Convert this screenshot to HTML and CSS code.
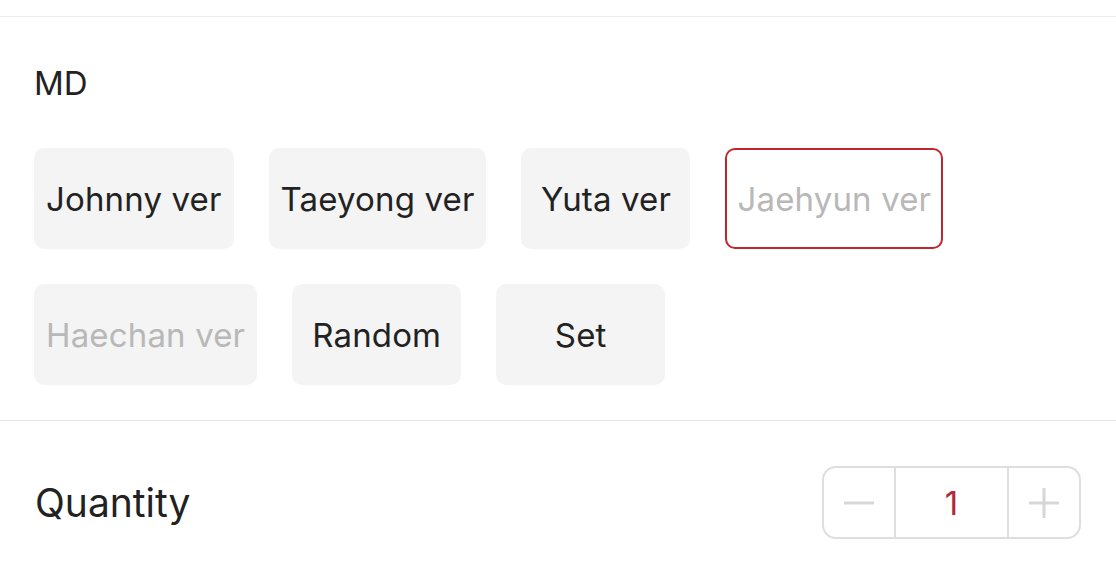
FILE: index.html
```html
<!DOCTYPE html>
<html lang="en">
<head>
    <meta charset="UTF-8">
    <meta name="viewport" content="width=device-width, initial-scale=1.0">
    <title>Options</title>
    <link rel="stylesheet" href="styles.css">
</head>
<body>
    <div class="top-bar"></div>

    <div class="option-section">
        <div class="option-title">MD</div>
        <div class="option-list">
            <button class="option-btn">Johnny ver</button>
            <button class="option-btn">Taeyong ver</button>
            <button class="option-btn">Yuta ver</button>
            <button class="option-btn selected soldout">Jaehyun ver</button>
            <button class="option-btn soldout">Haechan ver</button>
            <button class="option-btn">Random</button>
            <button class="option-btn">Set</button>
        </div>
    </div>

    <div class="quantity-row">
        <div class="quantity-label">Quantity</div>
        <div class="stepper">
            <button class="step-btn" aria-label="decrease">
                <svg width="30" height="30" viewBox="0 0 30 30"><path d="M1 15h28" stroke="#d6d6d6" stroke-width="3" stroke-linecap="round"/></svg>
            </button>
            <div class="step-value">1</div>
            <button class="step-btn" aria-label="increase">
                <svg width="30" height="30" viewBox="0 0 30 30"><path d="M1 15h28M15 1v28" stroke="#d6d6d6" stroke-width="3" stroke-linecap="round"/></svg>
            </button>
        </div>
    </div>
</body>
</html>
```

FILE: styles.css
```css
body {
    margin: 0;
    background: #fff;
    font-family: 'Inter', 'Liberation Sans', sans-serif;
    color: #222;
}
.top-bar {
    height: 16px;
    border-bottom: 1px solid #ececec;
}
.option-section {
    padding: 46px 35px 35px 34px;
    border-bottom: 1px solid #e6e6e6;
}
.option-title {
    font-size: 33px;
    line-height: 40px;
    margin-bottom: 45px;
}
.option-list {
    display: flex;
    flex-wrap: wrap;
    gap: 35px;
}
.option-btn {
    height: 101px;
    min-width: 169px;
    padding: 0 12px;
    border: none;
    border-radius: 10px;
    background: #f4f4f4;
    font-family: inherit;
    font-size: 33px;
    letter-spacing: 0.15px;
    color: #222;
    display: flex;
    align-items: center;
    justify-content: center;
}
.option-btn.soldout {
    color: #b8b8b8;
}
.option-btn.selected {
    background: #fff;
    border: 2px solid #c0272d;
    padding: 0 10px;
}
.quantity-row {
    display: flex;
    align-items: center;
    justify-content: space-between;
    padding: 45px 35px 0 35px;
}
.quantity-label {
    font-size: 39px;
}
.stepper {
    display: flex;
    height: 73px;
    border: 2px solid #dedede;
    border-radius: 14px;
    box-sizing: border-box;
}
.step-btn {
    width: 70px;
    border: none;
    background: none;
    padding: 0;
    display: flex;
    align-items: center;
    justify-content: center;
}
.step-value {
    width: 111px;
    border-left: 2px solid #dedede;
    border-right: 2px solid #dedede;
    display: flex;
    align-items: center;
    justify-content: center;
    font-size: 33px;
    color: #b02a3c;
}
```
